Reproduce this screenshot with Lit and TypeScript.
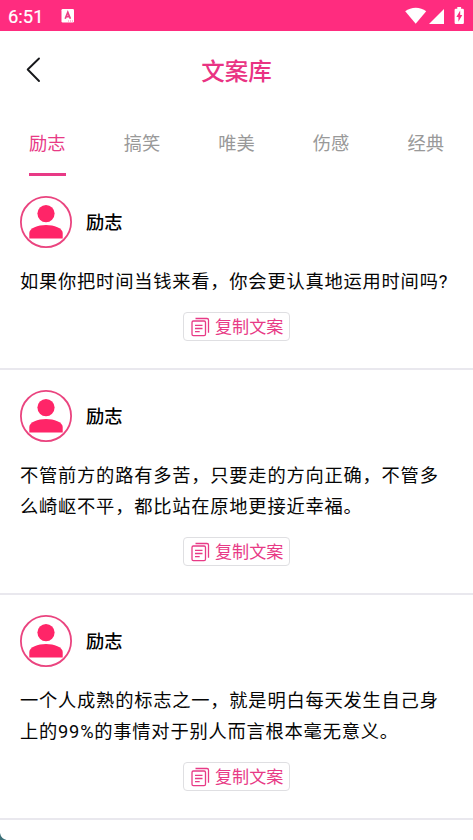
import { LitElement, html, css } from "lit";
import { customElement, property } from "lit/decorators.js";

const TABS = ["励志", "搞笑", "唯美", "伤感", "经典"];
const QUOTES = [
  ["如果你把时间当钱来看，你会更认真地运用时间吗?"],
  ["不管前方的路有多苦，只要走的方向正确，不管多", "么崎岖不平，都比站在原地更接近幸福。"],
  ["一个人成熟的标志之一，就是明白每天发生自己身", "上的99%的事情对于别人而言根本毫无意义。"],
];

@customElement("status-bar")
class StatusBar extends LitElement {
  static styles = css`
    :host { display: flex; align-items: center; height: 31px; box-sizing: border-box; padding: 0 8px; background: #ff2c7f; color: #fff; }
    .time { font: 400 18.4px/31px Roboto, sans-serif; width: 53px; padding-top: 2px; -webkit-text-stroke: 0.2px #fff; }
    .icons { margin-left: auto; }
    svg { display: block; }
  `;
  render() {
    return html`
      <div class="time">6:51</div>
      <svg width="14" height="31" viewBox="61 0 14 31">
        <rect x="61.5" y="9" width="12.5" height="13.5" rx="1.2" fill="#fff" />
        <path d="M65.2 18.8 67.8 12.3 70.4 18.8M66.1 16.7h3.4" fill="none" stroke="#ee3c85" stroke-width="1.7" />
        <path d="M68 21h1M70 21h1M72 21h1" stroke="#ff79ae" stroke-width="1" />
      </svg>
      <svg class="icons" width="61" height="31" viewBox="404 0 61 31" fill="#fff">
        <path d="M405.2 11.3C411 6.5 420.5 6.5 426.2 11.3L415.7 23.7Z" />
        <path d="M444 9v15h-15z" />
        <path d="M457.3 7h3.8v1.8h1.6q1.2 0 1.2 1.2v12.8q0 1.2-1.2 1.2h-6.9q-1.2 0-1.2-1.2V10q0-1.2 1.2-1.2h1.5z" />
        <path d="M460.2 10.5v4.4h2.1l-3.9 6.8v-4.8h-2z" fill="#ff2c7f" />
      </svg>`;
  }
}

@customElement("quote-card")
class QuoteCard extends LitElement {
  @property({ attribute: false }) lines: string[] = [];
  static styles = css`
    :host { display: block; box-sizing: border-box; padding: 20px 20px 26.5px; border-bottom: 2px solid #e9e8ee; }
    :host(:first-child) { padding-top: 19.5px; }
    .author { display: flex; align-items: center; gap: 14px; height: 52px; }
    .avatar { display: block; width: 52px; height: 52px; }
    .name { font-size: 18.25px; font-weight: 500; line-height: 28px; padding-top: 2.5px; color: #000; }
    .text { margin-top: 18px; font-size: 18.25px; line-height: 31px; letter-spacing: 0.78px; color: #050505; white-space: nowrap; }
    .copy { margin: 15.5px auto 0; width: 107px; height: 29px; box-sizing: border-box; display: flex; align-items: center; border: 1px solid #dfdfe2; border-radius: 4px; background: #fff; padding: 0 0 0 7px; gap: 5px; color: #e83a86; font: inherit; font-size: 17.1px; line-height: 26px; white-space: nowrap; }
    .copy svg { flex: none; display: block; }
  `;
  render() {
    return html`
      <div class="author">
        <svg class="avatar" viewBox="0 0 52 52">
          <circle cx="26" cy="26" r="25.1" fill="#fff" stroke="#ea447f" stroke-width="1.8" />
          <circle cx="26" cy="17.6" r="8.6" fill="#ff2568" />
          <path d="M9.3 42.5V37C9.3 32 18 29 26 29S42.7 32 42.7 37V42.5Z" fill="#ff2568" />
        </svg>
        <div class="name">励志</div>
      </div>
      <div class="text">${this.lines.map((line) => html`<div>${line}</div>`)}</div>
      <button class="copy">
        <svg width="19" height="20" viewBox="0 0 19 20" fill="none" stroke="#e83a86" stroke-width="1.3">
          <rect x="1" y="4" width="13.5" height="14.6" rx="1.4" />
          <path d="M4.5 1.5H16Q17.5 1.5 17.5 3V15.7" />
          <path d="M4 8.4h7.5M4 11.5h7.5M4 14.6h4.7" />
        </svg>
        <span>复制文案</span>
      </button>`;
  }
}

@customElement("app-root")
class AppRoot extends LitElement {
  static styles = css`
    :host { display: block; position: relative; width: 100%; height: 840px; overflow: hidden; background: #fff; font-family: Roboto, "Noto Sans CJK SC", sans-serif; }
    .header { display: grid; grid-template-columns: 68px 1fr 68px; align-items: center; height: 80px; }
    .back { display: block; margin: 0 0 2px 26px; }
    .title { margin: 0; padding-top: 2px; text-align: center; font-size: 23.5px; font-weight: 500; line-height: 34px; color: #e93383; }
    .tabs { display: grid; grid-template-columns: repeat(5, 1fr); height: 65px; }
    .tab { display: flex; flex-direction: column; align-items: center; justify-content: space-between; padding-top: 19px; font-size: 18.25px; line-height: 28px; color: #999; }
    .tab.active { color: #e83a86; }
    .tab.active::after { content: ""; width: 37px; height: 3px; background: #e83a86; }
    .corner { position: absolute; left: 0; bottom: 0; display: block; }
  `;
  render() {
    return html`
      <status-bar></status-bar>
      <header class="header">
        <svg class="back" width="16" height="26" viewBox="0 0 16 26" fill="none" stroke="#16171a" stroke-width="1.9" stroke-linecap="round" stroke-linejoin="round">
          <path d="M13 1.5 1.7 12.5 13 24" />
        </svg>
        <h1 class="title">文案库</h1>
      </header>
      <nav class="tabs">
        ${TABS.map((tab, i) => html`<div class="tab ${i === 0 ? "active" : ""}">${tab}</div>`)}
      </nav>
      <main>${QUOTES.map((lines) => html`<quote-card .lines=${lines}></quote-card>`)}</main>
      <svg class="corner" width="7" height="7" viewBox="0 0 7 7"><path d="M0 0Q1 5.5 6.5 7H0Z" fill="#3b7078" /></svg>`;
  }
}
